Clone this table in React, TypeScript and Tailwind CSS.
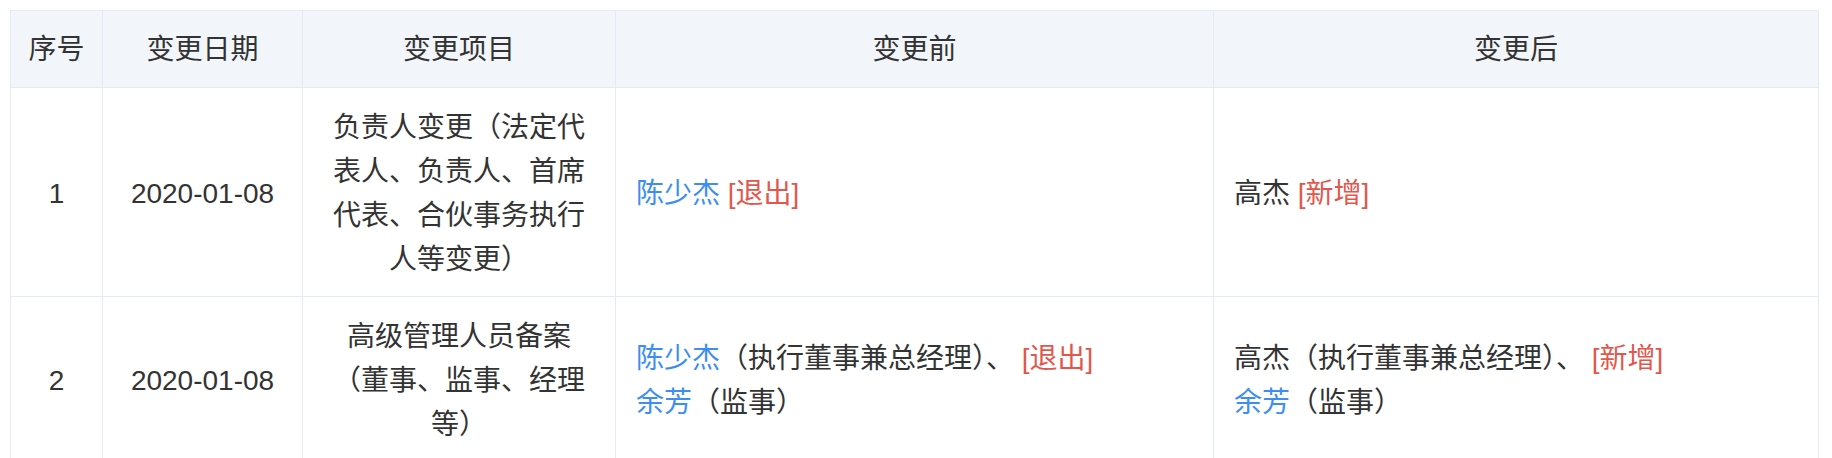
import React from "react";

type Person = { name: string; role?: string; link: boolean };

interface ChangeRow {
  no: number;
  date: string;
  item: string;
  before: Person[];
  beforeTag: string;
  after: Person[];
  afterTag: string;
}

const rows: ChangeRow[] = [
  {
    no: 1,
    date: "2020-01-08",
    item: "负责人变更（法定代表人、负责人、首席代表、合伙事务执行人等变更）",
    before: [{ name: "陈少杰", link: true }],
    beforeTag: "[退出]",
    after: [{ name: "高杰", link: false }],
    afterTag: "[新增]",
  },
  {
    no: 2,
    date: "2020-01-08",
    item: "高级管理人员备案（董事、监事、经理等）",
    before: [
      { name: "陈少杰", role: "（执行董事兼总经理）、", link: true },
      { name: "余芳", role: "（监事）", link: true },
    ],
    beforeTag: "[退出]",
    after: [
      { name: "高杰", role: "（执行董事兼总经理）、", link: false },
      { name: "余芳", role: "（监事）", link: true },
    ],
    afterTag: "[新增]",
  },
];

const PersonList = ({ people, tag }: { people: Person[]; tag: string }) => (
  <div>
    {people.map((p, idx) => (
      <div key={idx}>
        <span className={p.link ? "text-[#3d8ef0]" : ""}>{p.name}</span>
        {p.role && <span>{p.role}</span>}
        {idx === 0 && <span className="text-[#e2574c]"> {tag}</span>}
      </div>
    ))}
  </div>
);

export default function App() {
  const th =
    "border border-[#e3ebf5] bg-[#f2f6fa] font-normal text-center align-middle pt-[17px] pb-[15px]";
  const td = "border border-[#e3ebf5] align-middle pt-[18px] pb-[14px]";

  return (
    <div
      className="bg-white min-h-screen p-[10px] text-[#333333] text-[28px] leading-[44px]"
      style={{ fontFamily: '"Liberation Sans", "Noto Sans CJK SC", sans-serif' }}
    >
      <table className="table-fixed border-collapse w-[1808px]">
        <colgroup>
          <col className="w-[92px]" />
          <col className="w-[200px]" />
          <col className="w-[313px]" />
          <col className="w-[598px]" />
          <col className="w-[605px]" />
        </colgroup>
        <thead>
          <tr>
            <th className={th}>序号</th>
            <th className={th}>变更日期</th>
            <th className={th}>变更项目</th>
            <th className={th}>变更前</th>
            <th className={th}>变更后</th>
          </tr>
        </thead>
        <tbody>
          {rows.map((r) => (
            <tr key={r.no}>
              <td className={`${td} text-center`}>{r.no}</td>
              <td className={`${td} text-center`}>{r.date}</td>
              <td className={`${td} text-center px-[24px]`}>{r.item}</td>
              <td className={`${td} px-[20px]`}>
                <PersonList people={r.before} tag={r.beforeTag} />
              </td>
              <td className={`${td} px-[20px]`}>
                <PersonList people={r.after} tag={r.afterTag} />
              </td>
            </tr>
          ))}
        </tbody>
      </table>
    </div>
  );
}
